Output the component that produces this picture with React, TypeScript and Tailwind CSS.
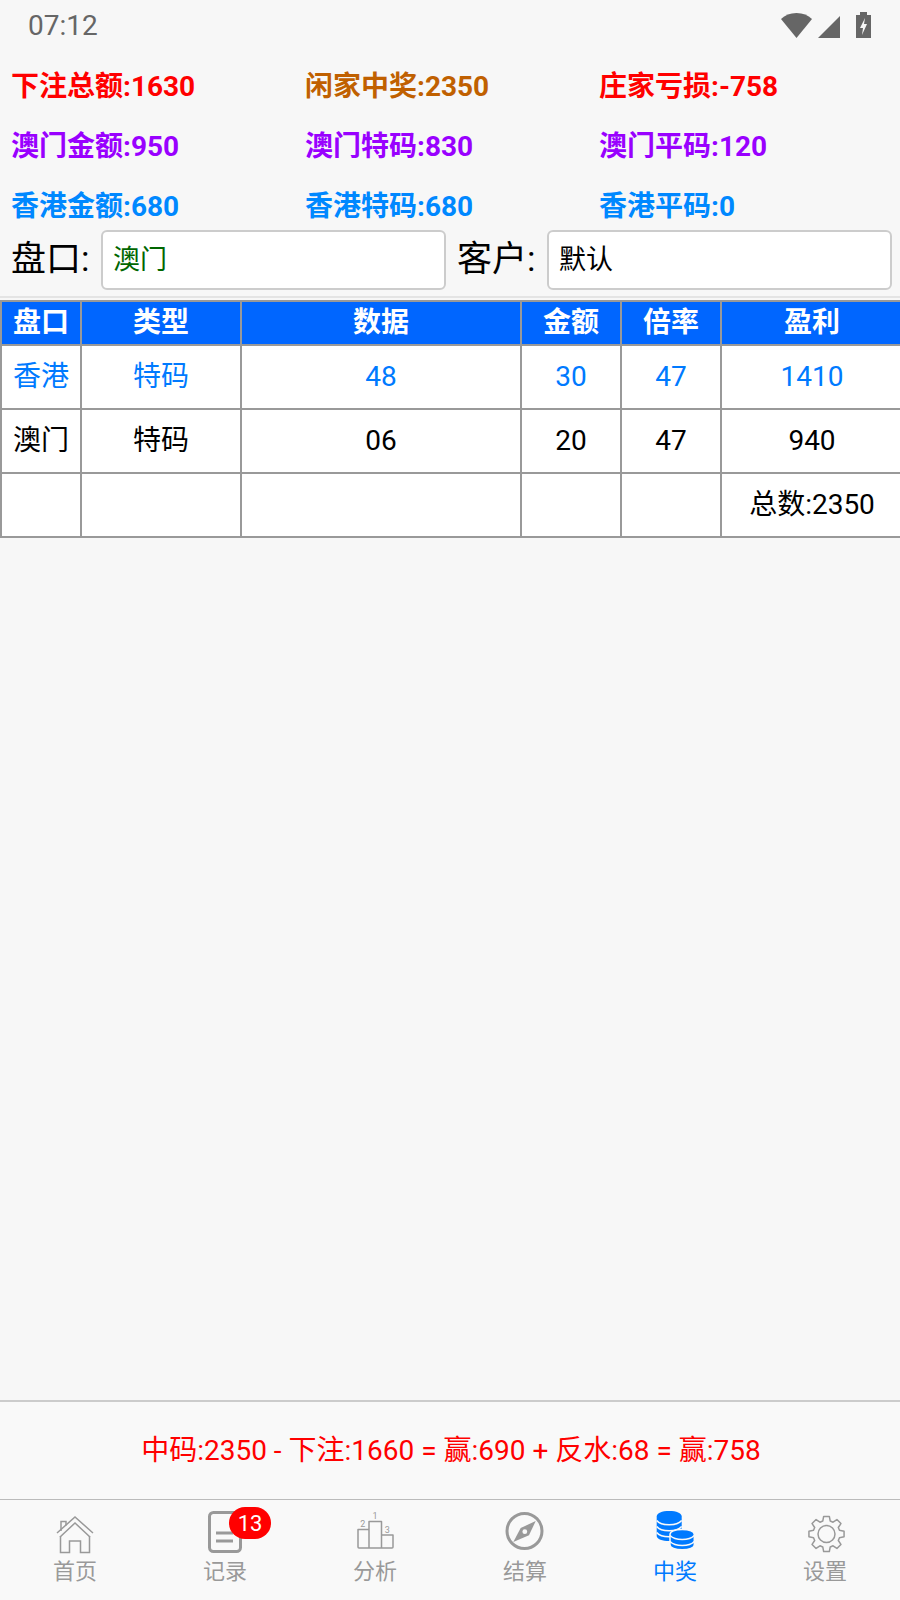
const STATS = [
  [
    { text: '下注总额:1630', color: 'text-[#ff0000]' },
    { text: '闲家中奖:2350', color: 'text-[#c06000]' },
    { text: '庄家亏损:-758', color: 'text-[#ff0000]' },
  ],
  [
    { text: '澳门金额:950', color: 'text-[#9900ff]' },
    { text: '澳门特码:830', color: 'text-[#9900ff]' },
    { text: '澳门平码:120', color: 'text-[#9900ff]' },
  ],
  [
    { text: '香港金额:680', color: 'text-[#0088ff]' },
    { text: '香港特码:680', color: 'text-[#0088ff]' },
    { text: '香港平码:0', color: 'text-[#0088ff]' },
  ],
]

const COLUMNS = ['盘口', '类型', '数据', '金额', '倍率', '盈利']

const ROWS = [
  { cells: ['香港', '特码', '48', '30', '47', '1410'], color: 'text-[#007aff]' },
  { cells: ['澳门', '特码', '06', '20', '47', '940'], color: 'text-black' },
]

const BAR_BG = '#f9f9f9'

// 8 teeth, one pointing straight up
function gearPath(cx: number, cy: number) {
  const pts: string[] = []
  for (let i = 0; i < 8; i++) {
    const a = (i * Math.PI) / 4 - Math.PI / 2
    const at = (r: number, d: number) =>
      `${(cx + r * Math.cos(a + d)).toFixed(2)} ${(cy + r * Math.sin(a + d)).toFixed(2)}`
    pts.push(at(13.5, -0.28), at(17.8, -0.16), at(17.8, 0.16), at(13.5, 0.28))
  }
  return `M${pts.join('L')}Z`
}

function HomeIcon() {
  return (
    <svg width="44" height="44" viewBox="0 0 44 44" fill="none" stroke="#999" strokeWidth="1.5">
      <path d="M4 23 22 7l18 16M7 27 22 13l15 14" />
      <path d="M7.5 26V42.5H16.5V31H27.5V42.5H36.5V26M8 21V11.5H13V15.5" />
    </svg>
  )
}

function RecordIcon() {
  return (
    <svg width="44" height="44" viewBox="0 0 44 44" fill="none" stroke="#999" strokeWidth="3">
      <rect x="6.5" y="2.5" width="31" height="39" rx="4" />
      <path d="M13 23h17M13 31h17" />
    </svg>
  )
}

function PodiumIcon() {
  return (
    <svg width="44" height="44" viewBox="0 0 44 44" fill="none" stroke="#999" strokeWidth="1.5">
      <path d="M5 19.5h11V38H6a1 1 0 0 1-1-1ZM16 11.5h12.5V38H16ZM28.5 25H40v12a1 1 0 0 1-1 1H28.5Z" strokeLinejoin="round" />
      <text x="22" y="9" fontSize="9" fill="#999" stroke="none" textAnchor="middle">1</text>
      <text x="9.7" y="17" fontSize="9" fill="#999" stroke="none" textAnchor="middle">2</text>
      <text x="34.3" y="22.5" fontSize="9" fill="#999" stroke="none" textAnchor="middle">3</text>
    </svg>
  )
}

function CompassIcon() {
  return (
    <svg width="44" height="44" viewBox="0 0 44 44" fill="none">
      <circle cx="21.5" cy="21" r="17.5" stroke="#999" strokeWidth="3" />
      <path d="M32.7 11 26 25.3 10.3 32 17.7 18Z" fill="#999" />
      <circle cx="21.8" cy="21.7" r="2.4" fill={BAR_BG} />
    </svg>
  )
}

function CoinsIcon() {
  return (
    <svg width="44" height="44" viewBox="0 0 44 44" fill="#007aff">
      <path d="M3.7 6.5C3.7 3 9 1 16.2 1S28.7 3 28.7 6.5V26C28.7 29 23 31 16.2 31S3.7 29 3.7 26Z" />
      <g fill="none" stroke={BAR_BG} strokeWidth="1.6">
        <path d="M3.7 10.5C6 13.5 11 14.8 16.2 14.8S26 13.5 28.7 10.5" />
        <path d="M3.7 16.5C6 19.5 11 20.8 16.2 20.8S26 19.5 28.7 16.5" />
        <path d="M3.7 22.5C6 25.5 11 26.8 16.2 26.8S26 25.5 28.7 22.5" />
      </g>
      <path d="M17 24.5C17 21.5 22 19.5 29.2 19.5S41.3 21.5 41.3 24.5V35C41.3 38 36 39.8 29.2 39.8S17 38 17 35Z" stroke={BAR_BG} strokeWidth="1.5" />
      <g fill="none" stroke={BAR_BG} strokeWidth="1.6">
        <path d="M17 25.5C20 28.5 25 29.5 29.2 29.5S38.5 28.5 41.3 25.5" />
        <path d="M17 31.5C20 34.5 25 35.5 29.2 35.5S38.5 34.5 41.3 31.5" />
      </g>
    </svg>
  )
}

function GearIcon() {
  return (
    <svg width="44" height="44" viewBox="0 0 44 44" fill="none" stroke="#999" strokeWidth="1.5">
      <circle cx="23.5" cy="24" r="8.5" />
      <path d={gearPath(23.5, 24)} strokeLinejoin="round" />
    </svg>
  )
}

const TABS = [
  { label: '首页', icon: <HomeIcon /> },
  { label: '记录', icon: <RecordIcon />, badge: '13' },
  { label: '分析', icon: <PodiumIcon /> },
  { label: '结算', icon: <CompassIcon /> },
  { label: '中奖', icon: <CoinsIcon />, active: true },
  { label: '设置', icon: <GearIcon /> },
]

function StatusBar() {
  return (
    <div className="flex h-[50px] shrink-0 items-center justify-between pl-[28px] pr-[29px]">
      <span className="pt-[1px] text-[28px] text-[#666]">07:12</span>
      <div className="flex items-center gap-[6px]">
        <svg width="31" height="26" viewBox="0 0 31 26" fill="#666">
          <path d="M0 7C4 3 9 1 15.5 1S27 3 31 7L15.5 26Z" />
        </svg>
        <svg width="22" height="22" viewBox="0 0 22 22" fill="#666" className="mt-[4px]">
          <path d="M22 0v22H0Z" />
        </svg>
        <svg width="15" height="26" viewBox="0 0 15 26" fill="#666" className="ml-[10px]">
          <path d="M4 0h7v3h4v23H0V3h4Zm5 6-5 10h3l-1 7 5-11H8Z" fillRule="evenodd" />
        </svg>
      </div>
    </div>
  )
}

function Field({ label, value, color }: { label: string; value: string; color: string }) {
  return (
    <div className="flex items-center">
      <span className="w-[90px] shrink-0 pb-[2px] text-[35px] leading-none text-black">{label}</span>
      <input
        readOnly
        value={value}
        className={`h-[60px] w-[345px] rounded-[6px] border-2 border-[#ccc] bg-white px-[10px] pb-[5px] text-[27px] outline-none ${color}`}
      />
    </div>
  )
}

export default function App() {
  return (
    <div className="flex h-[1600px] w-[900px] flex-col overflow-hidden bg-[#f7f7f7] font-[Roboto,'Noto_Sans_CJK_SC',sans-serif]">
      <StatusBar />

      <div className="mt-[7px] flex flex-col">
        {STATS.map((row, i) => (
          <div key={i} className="grid h-[60px] grid-cols-[294px_294px_294px] items-center pl-[11px]">
            {row.map((s) => (
              <span key={s.text} className={`text-[28px] font-bold ${s.color}`}>
                {s.text}
              </span>
            ))}
          </div>
        ))}
      </div>

      <div className="-mt-[7px] flex justify-between pl-[11px] pr-[8px]">
        <Field label="盘口:" value="澳门" color="text-[#006600]" />
        <Field label="客户:" value="默认" color="text-black" />
      </div>

      <div className="mt-[6px] h-[2px] shrink-0 bg-[#e4e4e4]" />

      <div className="mt-[2px] w-[900px] overflow-hidden">
        <table className="w-[902px] table-fixed border-collapse bg-white text-center text-[28px]">
          <colgroup>
            <col className="w-[80px]" />
            <col className="w-[160px]" />
            <col className="w-[280px]" />
            <col className="w-[100px]" />
            <col className="w-[100px]" />
            <col className="w-[182px]" />
          </colgroup>
          <thead>
            <tr className="h-[44px] bg-[#0066ff] text-white">
              {COLUMNS.map((c) => (
                <th key={c} className="border-2 border-[#999] p-0 font-bold">
                  {c}
                </th>
              ))}
            </tr>
          </thead>
          <tbody>
            {ROWS.map((row, i) => (
              <tr key={i} className={`h-[64px] ${row.color}`}>
                {row.cells.map((c, j) => (
                  <td key={j} className="border-2 border-[#999] p-0">
                    {c}
                  </td>
                ))}
              </tr>
            ))}
            <tr className="h-[64px] text-black">
              <td className="border-2 border-[#999]" />
              <td className="border-2 border-[#999]" />
              <td className="border-2 border-[#999]" />
              <td className="border-2 border-[#999]" />
              <td className="border-2 border-[#999]" />
              <td className="border-2 border-[#999] p-0">总数:2350</td>
            </tr>
          </tbody>
        </table>
      </div>

      <div className="flex-1" />

      <div className="flex h-[99px] shrink-0 items-center justify-center border-t-2 border-[#ccc] bg-[#f9f9f9] pl-[2px] text-[28px] text-[#ff0000]">
        中码:2350 - 下注:1660 = 赢:690 + 反水:68 = 赢:758
      </div>

      <nav className="flex h-[101px] shrink-0 border-t border-[#bbb] bg-[#f9f9f9]">
        {TABS.map((t) => (
          <div key={t.label} className="flex w-[150px] flex-col items-center pt-[10px]">
            <div className="relative h-[44px] w-[44px]">
              {t.icon}
              {t.badge && (
                <span className="absolute left-[26px] top-[-3px] flex h-[32px] w-[42px] items-center justify-center rounded-full bg-[#ff0000] text-[22px] text-white">
                  {t.badge}
                </span>
              )}
            </div>
            <span className={`mt-[3px] text-[22px] leading-[30px] ${t.active ? 'text-[#007aff]' : 'text-[#999]'}`}>
              {t.label}
            </span>
          </div>
        ))}
      </nav>
    </div>
  )
}
